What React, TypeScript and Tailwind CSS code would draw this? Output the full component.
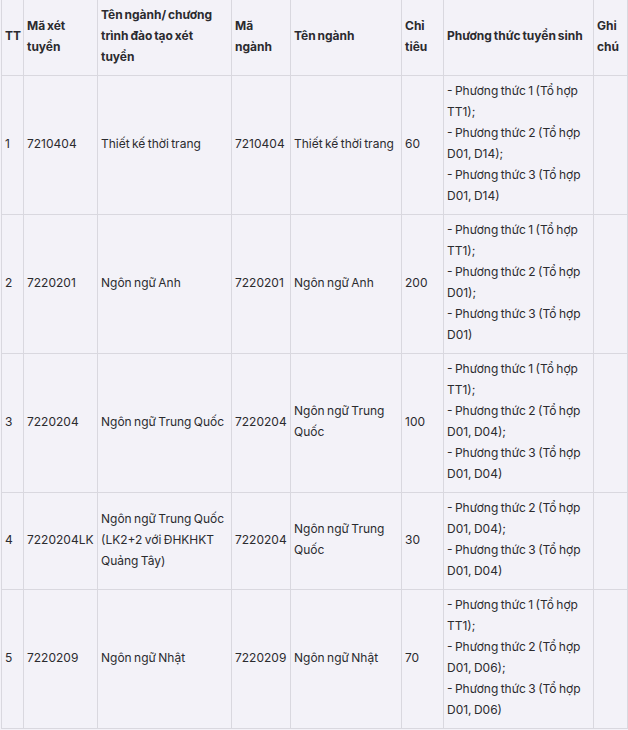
import React from 'react';

type Row = {
  tt: string;
  code: string;
  program: string[];
  majorCode: string;
  major: string[];
  quota: string;
  methods: string[];
};

const m = (n: number, combo: string, last: boolean) => [
  `- Phương thức ${n} (Tổ hợp`,
  `${combo}${last ? ')' : ');'}`,
];

const ROWS: Row[] = [
  {
    tt: '1',
    code: '7210404',
    program: ['Thiết kế thời trang'],
    majorCode: '7210404',
    major: ['Thiết kế thời trang'],
    quota: '60',
    methods: [...m(1, 'TT1', false), ...m(2, 'D01, D14', false), ...m(3, 'D01, D14', true)],
  },
  {
    tt: '2',
    code: '7220201',
    program: ['Ngôn ngữ Anh'],
    majorCode: '7220201',
    major: ['Ngôn ngữ Anh'],
    quota: '200',
    methods: [...m(1, 'TT1', false), ...m(2, 'D01', false), ...m(3, 'D01', true)],
  },
  {
    tt: '3',
    code: '7220204',
    program: ['Ngôn ngữ Trung Quốc'],
    majorCode: '7220204',
    major: ['Ngôn ngữ Trung', 'Quốc'],
    quota: '100',
    methods: [...m(1, 'TT1', false), ...m(2, 'D01, D04', false), ...m(3, 'D01, D04', true)],
  },
  {
    tt: '4',
    code: '7220204LK',
    program: ['Ngôn ngữ Trung Quốc', '(LK2+2 với ĐHKHKT', 'Quảng Tây)'],
    majorCode: '7220204',
    major: ['Ngôn ngữ Trung', 'Quốc'],
    quota: '30',
    methods: [...m(2, 'D01, D04', false), ...m(3, 'D01, D04', true)],
  },
  {
    tt: '5',
    code: '7220209',
    program: ['Ngôn ngữ Nhật'],
    majorCode: '7220209',
    major: ['Ngôn ngữ Nhật'],
    quota: '70',
    methods: [...m(1, 'TT1', false), ...m(2, 'D01, D06', false), ...m(3, 'D01, D06', true)],
  },
];

const HEADERS: string[][] = [
  ['TT'],
  ['Mã xét', 'tuyển'],
  ['Tên ngành/ chương', 'trình đào tạo xét', 'tuyển'],
  ['Mã', 'ngành'],
  ['Tên ngành'],
  ['Chỉ', 'tiêu'],
  ['Phương thức tuyển sinh'],
  ['Ghi', 'chú'],
];

function Cell({ lines, bold }: { lines: string[]; bold?: boolean }) {
  return (
    <div
      className={`flex items-center border-r border-b border-[#d9d8df] px-[3px] pt-[4px] pb-[8px] ${
        bold ? 'font-bold' : ''
      }`}
    >
      <div>
        {lines.map((l, i) => (
          <div key={i} className="whitespace-nowrap">
            {l}
          </div>
        ))}
      </div>
    </div>
  );
}

export default function App() {
  return (
    <div className="min-h-screen w-[628px] bg-[#f3f2f8]">
      <div
        className="ml-px grid grid-cols-[22px_74px_134px_59px_111px_42px_150px_34px] border-l border-[#d9d8df] text-[12px] leading-[21px] text-[#2b2b2f] [word-spacing:-1px]"
        style={{ fontFamily: 'Inter, "Noto Sans", sans-serif' }}
      >
        {HEADERS.map((h, i) => (
          <Cell key={i} lines={h} bold />
        ))}
        {ROWS.map((r) => (
          <React.Fragment key={r.tt}>
            <Cell lines={[r.tt]} />
            <Cell lines={[r.code]} />
            <Cell lines={r.program} />
            <Cell lines={[r.majorCode]} />
            <Cell lines={r.major} />
            <Cell lines={[r.quota]} />
            <Cell lines={r.methods} />
            <Cell lines={[]} />
          </React.Fragment>
        ))}
      </div>
    </div>
  );
}
